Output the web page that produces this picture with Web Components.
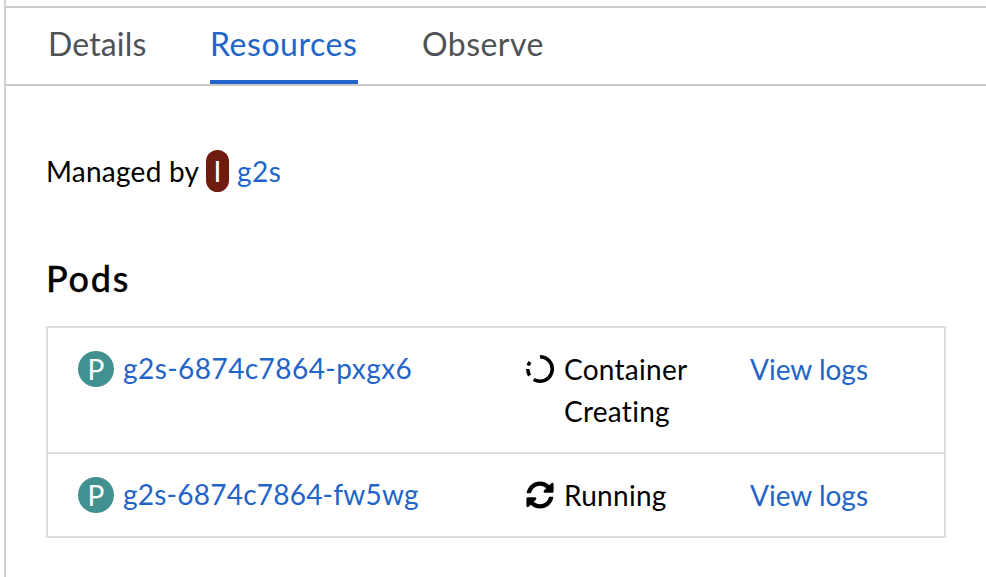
<!DOCTYPE html>
<html lang="en"><head><meta charset="utf-8"><title>Resources</title>
<style>
html,body{margin:0;height:100%;background:#fff;overflow:hidden}
body{font-family:Lato,"Open Sans",sans-serif;font-size:28px;line-height:42px;color:#000;font-variant-ligatures:none}
.n1{letter-spacing:.44px}
.n2{letter-spacing:.23px}
</style></head><body>
<side-panel>
  <tab-bar slot="tabs">
    <tab-item style="--w:98px;letter-spacing:.15px">Details</tab-item>
    <tab-item active style="--w:148px;letter-spacing:.55px">Resources</tab-item>
    <tab-item style="--w:122px;letter-spacing:.45px">Observe</tab-item>
  </tab-bar>
  <managed-by><resource-badge kind="operator">I</resource-badge><text-link slot="link" style="letter-spacing:.5px">g2s</text-link></managed-by>
  <pod-list heading="Pods">
    <pod-row><text-link slot="name" class="n1">g2s-6874c7864-pxgx6</text-link><status-icon slot="icon" type="creating"></status-icon>Container Creating</pod-row>
    <pod-row><text-link slot="name" class="n2">g2s-6874c7864-fw5wg</text-link><status-icon slot="icon" type="running"></status-icon>Running</pod-row>
  </pod-list>
</side-panel>
<script>
const define=(name,html,setup)=>customElements.define(name,class extends HTMLElement{
  constructor(){super();this.attachShadow({mode:'open'}).innerHTML=html}
  connectedCallback(){if(setup)setup(this,this.shadowRoot)}
});
define('side-panel',`<style>
:host{display:block;box-sizing:border-box;height:577px;margin-left:4px;padding-top:6px;border-left:2px solid #d2d2d2}
.body{padding:64px 40px 0}</style><slot name="tabs"></slot><div class="body"><slot></slot></div>`);
define('tab-bar',`<style>
:host{display:flex;gap:64px;box-sizing:border-box;height:80px;padding-left:42px;border-top:2px solid #cacaca;border-bottom:2px solid #cacaca}</style><slot></slot>`);
define('tab-item',`<style>
:host{display:block;box-sizing:border-box;width:var(--w);height:76px;padding:12px 0 0;font-size:32px;line-height:48px;color:#4f5255;white-space:nowrap}
:host([active]){color:#2264c8;border-bottom:4px solid #2264c8}</style><slot></slot>`);
define('text-link',`<style>
:host{display:inline-block;color:#2264c8;white-space:nowrap}</style><slot></slot>`);
define('resource-badge',`<style>
:host{display:flex;justify-content:center;align-items:center;width:36px;height:36px;border-radius:21px;background:#40918f;color:#fff;flex:none;line-height:36px}
:host([kind=operator]){width:23px;height:42px;background:#701b10}</style><slot></slot>`);
define('managed-by',`<style>
:host{display:flex;height:42px}
.label{width:160px;white-space:nowrap;letter-spacing:.25px}
.link{margin-left:8px}</style><span class="label">Managed by</span><slot></slot><span class="link"><slot name="link"></slot></span>`);
define('pod-list',`<style>
:host{display:block}
h2{margin:59px 0 20px;font-size:36px;font-weight:500;line-height:55px;letter-spacing:1.7px;-webkit-text-stroke:.3px #000}
.rows{border:2px solid #dcdcdc;border-bottom:0}</style><h2></h2><div class="rows"><slot></slot></div>`,
(el,r)=>{r.querySelector('h2').textContent=el.getAttribute('heading')});
define('pod-row',`<style>
:host{display:grid;grid-template-columns:448px 224px 1fr;padding:20px 0 20px 30px;border-bottom:2px solid #dcdcdc}
.name,.status{display:flex}
.name{gap:9px}
resource-badge{margin-top:3px}
slot[name=name]::slotted(*){margin-top:-1px}
.status{gap:10px}
.text{width:140px;letter-spacing:.27px}</style>
<div class="name"><resource-badge>P</resource-badge><slot name="name"></slot></div>
<div class="status"><slot name="icon"></slot><div class="text"><slot></slot></div></div>
<text-link class="logs">View logs</text-link>`);
const icons={
creating:`<circle cx="14" cy="14" r="12.25" fill="none" stroke="#000" stroke-width="3.5" pathLength="360" stroke-dasharray="211 27 32 17 18 55" transform="rotate(-90 14 14)"/>`,
running:`<path transform="scale(.0546875)" d="M370.72 133.28C339.458 104.008 298.888 87.962 255.848 88c-77.458.068-144.328 53.178-162.791 126.85-1.344 5.363-6.122 9.15-11.651 9.15H24.103c-7.498 0-13.194-6.807-11.807-14.176C33.933 94.924 134.813 8 256 8c66.448 0 126.791 26.136 171.315 68.685L463.03 40.97C478.149 25.851 504 36.559 504 57.941V192c0 13.255-10.745 24-24 24H345.941c-21.382 0-32.09-25.851-16.971-40.971zM32 296h134.059c21.382 0 32.09 25.851 16.971 40.971l-41.75 41.75c31.262 29.273 71.835 45.319 114.876 45.28 77.418-.07 144.315-53.144 162.787-126.849 1.344-5.363 6.122-9.15 11.651-9.15h57.304c7.498 0 13.194 6.807 11.807 14.176C478.067 417.076 377.187 504 256 504c-66.448 0-126.791-26.136-171.315-68.685L48.97 471.03C33.851 486.149 8 475.441 8 454.059V320c0-13.255 10.745-24 24-24z"/>`};
define('status-icon',`<style>:host{display:block;width:28px;height:28px;margin-top:7px;flex:none}svg{display:block}</style><svg width="28" height="28" viewBox="0 0 28 28"></svg>`,
(el,r)=>{r.querySelector('svg').innerHTML=icons[el.getAttribute('type')]});
</script></body></html>
